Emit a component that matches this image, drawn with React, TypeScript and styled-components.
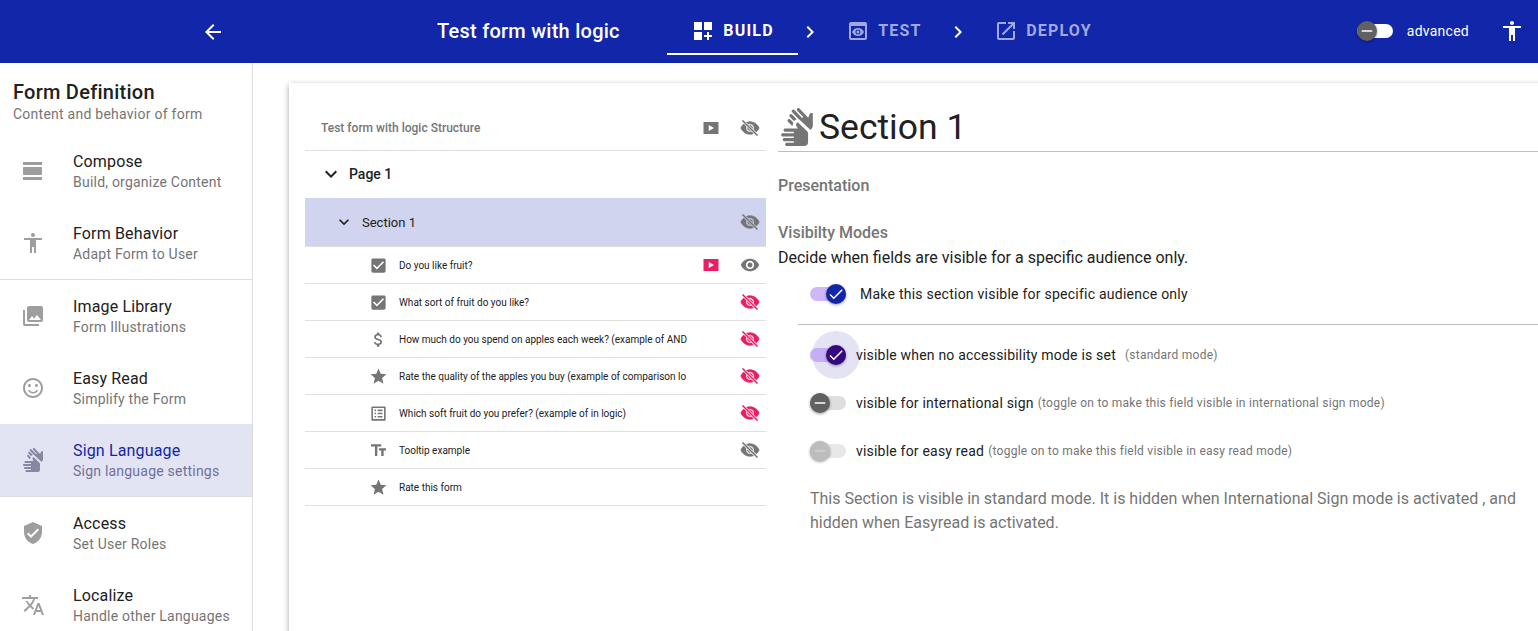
import React from "react";
import styled, { createGlobalStyle } from "styled-components";
import { MdSignLanguage } from "react-icons/md";

const GlobalStyle = createGlobalStyle`
  html, body {
    margin: 0;
    height: 100%;
    overflow: hidden;
    background: #fff;
    font-family: Roboto, "Liberation Sans", sans-serif;
  }
`;

const P = {
  back: "M20 11H7.83l5.59-5.59L12 4l-8 8 8 8 1.41-1.41L7.83 13H20v-2z",
  build: "M3 3h8v8H3zm10 0h8v8h-8zM3 13h8v8H3zm15 0h-2v3h-3v2h3v3h2v-3h3v-2h-3z",
  preview:
    "M19 3H5c-1.11 0-2 .9-2 2v14c0 1.1.89 2 2 2h14c1.1 0 2-.9 2-2V5c0-1.1-.89-2-2-2zm0 16H5V7h14v12zm-5.5-6c0 .83-.67 1.5-1.5 1.5s-1.5-.67-1.5-1.5.67-1.5 1.5-1.5 1.5.67 1.5 1.5zM12 9c-2.73 0-5.06 1.66-6 4 .94 2.34 3.27 4 6 4s5.06-1.66 6-4c-.94-2.34-3.27-4-6-4zm0 6.5c-1.38 0-2.5-1.12-2.5-2.5s1.12-2.5 2.5-2.5 2.5 1.12 2.5 2.5-1.12 2.5-2.5 2.5z",
  open: "M19 19H5V5h7V3H5c-1.11 0-2 .9-2 2v14c0 1.1.89 2 2 2h14c1.1 0 2-.9 2-2v-7h-2v7zM14 3v2h3.59l-9.83 9.83 1.41 1.41L19 6.41V10h2V3h-7z",
  chevron: "M10 6L8.59 7.41 13.17 12l-4.58 4.59L10 18l6-6z",
  access: "M12 2c1.1 0 2 .9 2 2s-.9 2-2 2-2-.9-2-2 .9-2 2-2zm9 7h-6v13h-2v-6h-2v6H9V9H3V7h18v2z",
  viewDay:
    "M2 21h19v-3H2v3zM20 8H3c-.55 0-1 .45-1 1v6c0 .55.45 1 1 1h17c.55 0 1-.45 1-1V9c0-.55-.45-1-1-1zM2 3v3h19V3H2z",
  photos:
    "M22 16V4c0-1.1-.9-2-2-2H8c-1.1 0-2 .9-2 2v12c0 1.1.9 2 2 2h12c1.1 0 2-.9 2-2zm-11-4l2.03 2.71L16 11l4 5H8l3-4zM2 6v14c0 1.1.9 2 2 2h14v-2H4V6H2z",
  smile:
    "M11.99 2C6.47 2 2 6.48 2 12s4.47 10 9.99 10C17.52 22 22 17.52 22 12S17.52 2 11.99 2zM12 20c-4.42 0-8-3.58-8-8s3.58-8 8-8 8 3.58 8 8-3.58 8-8 8zm3.5-9c.83 0 1.5-.67 1.5-1.5S16.33 8 15.5 8 14 8.67 14 9.5s.67 1.5 1.5 1.5zm-7 0c.83 0 1.5-.67 1.5-1.5S9.33 8 8.5 8 7 8.67 7 9.5 7.67 11 8.5 11zm3.5 5c-1.48 0-2.75-.81-3.45-2H6.88c.8 2.05 2.79 3.5 5.12 3.5s4.32-1.45 5.12-3.5h-1.67c-.7 1.19-1.97 2-3.45 2z",
  verified:
    "M12 1L3 5v6c0 5.55 3.84 10.74 9 12 5.16-1.26 9-6.45 9-12V5l-9-4zm-2 16l-4-4 1.41-1.41L10 14.17l6.59-6.59L18 9l-8 8z",
  translate:
    "M12.87 15.07l-2.54-2.51.03-.03c1.74-1.94 2.98-4.17 3.71-6.53H17V4h-7V2H8v2H1v1.99h11.17C11.5 7.92 10.44 9.75 9 11.35 8.07 10.32 7.3 9.19 6.69 8h-2c.73 1.63 1.73 3.17 2.98 4.56l-5.09 5.02L4 19l5-5 3.11 3.11.76-2.04zM18.5 10h-2L12 22h2l1.12-3h4.75L21 22h2l-4.5-12zm-2.62 7l1.62-4.33L19.12 17h-3.24z",
  expand: "M16.59 8.59L12 13.17 7.41 8.59 6 10l6 6 6-6z",
  checkBox:
    "M19 3H5c-1.11 0-2 .9-2 2v14c0 1.1.89 2 2 2h14c1.11 0 2-.9 2-2V5c0-1.1-.89-2-2-2zm-9 14l-5-5 1.41-1.41L10 14.17l7.59-7.59L19 8l-9 9z",
  money:
    "M11.8 10.9c-2.27-.59-3-1.2-3-2.15 0-1.09 1.01-1.85 2.7-1.85 1.78 0 2.44.85 2.5 2.1h2.21c-.07-1.72-1.12-3.3-3.21-3.81V3h-3v2.16c-1.94.42-3.5 1.68-3.5 3.61 0 2.31 1.91 3.46 4.7 4.13 2.5.6 3 1.48 3 2.41 0 .69-.49 1.79-2.7 1.79-2.06 0-2.87-.92-2.98-2.1h-2.2c.12 2.19 1.76 3.42 3.68 3.83V21h3v-2.15c1.95-.37 3.5-1.5 3.5-3.55 0-2.84-2.43-3.81-4.7-4.4z",
  star: "M12 17.27L18.18 21l-1.64-7.03L22 9.24l-7.19-.61L12 2 9.19 8.63 2 9.24l5.46 4.73L5.82 21z",
  listAlt:
    "M19 5v14H5V5h14m1.1-2H3.9c-.5 0-.9.4-.9.9v16.2c0 .4.4.9.9.9h16.2c.4 0 .9-.5.9-.9V3.9c0-.5-.5-.9-.9-.9zM11 7h6v2h-6V7zm0 4h6v2h-6v-2zm0 4h6v2h-6zM7 7h2v2H7zm0 4h2v2H7zm0 4h2v2H7z",
  text: "M2.5 4v3h5v12h3V7h5V4h-13zm19 5h-9v3h3v7h3v-7h3V9z",
  eye: "M12 4.5C7 4.5 2.73 7.61 1 12c1.73 4.39 6 7.5 11 7.5s9.27-3.11 11-7.5c-1.73-4.39-6-7.5-11-7.5zM12 17c-2.76 0-5-2.24-5-5s2.24-5 5-5 5 2.24 5 5-2.24 5-5 5zm0-8c-1.66 0-3 1.34-3 3s1.34 3 3 3 3-1.34 3-3-1.34-3-3-3z",
  play: "M2 4h20v16H2zM9 8v8l7-4z",
  minus: "M19 13H5v-2h14v2z",
  check: "M9 16.17L4.83 12l-1.42 1.41L9 19 21 7l-1.41-1.41z",
};

const Icon = ({ d, size = 24, color = "currentColor" }: { d: string; size?: number; color?: string }) => (
  <svg width={size} height={size} viewBox="0 0 24 24" fill={color} style={{ display: "block", flex: "none" }}>
    <path d={d} />
  </svg>
);

// eye with a slash cut through it, the gap round the slash follows the row background
const EyeOff = ({ color, id }: { color: string; id: string }) => (
  <svg width={20} height={20} viewBox="0 0 24 24" style={{ display: "block", flex: "none" }}>
    <mask id={id}>
      <rect width="24" height="24" fill="#fff" />
      <line x1="3" y1="3" x2="21" y2="21" stroke="#000" strokeWidth="3.4" />
    </mask>
    <path d={P.eye} fill={color} stroke={color} strokeWidth="0.8" mask={`url(#${id})`} />
    <line x1="3" y1="3" x2="21" y2="21" stroke={color} strokeWidth="2" />
  </svg>
);

const Header = styled.header`
  height: 63px;
  background: #1226aa;
  color: #fff;
  display: flex;
  align-items: center;
`;

const BackSlot = styled.div`
  width: 437px;
  flex: none;
  display: flex;
  padding-left: 201px;
  box-sizing: border-box;
`;

const FormTitle = styled.div`
  width: 230px;
  flex: none;
  font-size: 20px;
  font-weight: 500;
  letter-spacing: 0.25px;
  margin-bottom: 2px;
`;

const Tab = styled.div<{ $active?: boolean; $width: number }>`
  width: ${(p) => p.$width}px;
  box-sizing: border-box;
  height: 55px;
  flex: none;
  align-self: flex-start;
  display: flex;
  align-items: center;
  justify-content: center;
  gap: 8px;
  font-size: 16px;
  font-weight: 700;
  letter-spacing: 1.2px;
  color: ${(p) => (p.$active ? "#fff" : "#a0a8dd")};
  border-bottom: 2px solid ${(p) => (p.$active ? "#fff" : "transparent")};
  padding-top: 8px;
`;

const TabSep = styled.div`
  width: 24px;
  flex: none;
`;

const HeaderRight = styled.div`
  margin-left: auto;
  display: flex;
  align-items: center;
  padding: 0 14px 2px 0;
  font-size: 14px;
`;

const AdvancedLabel = styled.span`
  margin-left: 14px;
  margin-right: 31px;
  letter-spacing: 0.25px;
`;

const Body = styled.div`
  display: flex;
  height: 568px;
  overflow: hidden;
`;

const Sidebar = styled.aside`
  width: 253px;
  flex: none;
  box-sizing: border-box;
  border-right: 1px solid #dedede;
  padding-top: 16px;
`;

const SideHead = styled.div`
  padding: 0 13px;
  height: 56px;
`;

const SideTitle = styled.div`
  font-size: 20px;
  line-height: 26px;
  font-weight: 500;
  letter-spacing: 0.25px;
  color: #212121;
`;

const SideSub = styled.div`
  font-size: 14px;
  line-height: 18px;
  letter-spacing: 0.25px;
  color: #757575;
`;

const SideItem = styled.div<{ $active?: boolean; $divider?: boolean }>`
  height: 72px;
  display: flex;
  align-items: center;
  padding-left: 21px;
  background: ${(p) => (p.$active ? "#e3e4f3" : "transparent")};
  ${(p) => (p.$divider ? "border-top: 1px solid #dedede;" : "")}
`;

const SideIcon = styled.div<{ $active?: boolean }>`
  width: 52px;
  flex: none;
  color: ${(p) => (p.$active ? "#87889f" : "#9e9e9e")};
`;

const SideText = styled.div`
  display: flex;
  flex-direction: column;
`;

const Primary = styled.span<{ $active?: boolean }>`
  font-size: 16px;
  line-height: 22px;
  letter-spacing: 0.15px;
  color: ${(p) => (p.$active ? "#1226aa" : "#212121")};
`;

const Secondary = styled.span<{ $active?: boolean }>`
  font-size: 14px;
  line-height: 18px;
  letter-spacing: 0.22px;
  color: ${(p) => (p.$active ? "#70719a" : "#757575")};
`;

const Main = styled.main`
  flex: 1;
  min-width: 0;
  padding: 20px 0 0 36px;
`;

const Card = styled.div`
  display: flex;
  width: 1300px;
  height: 640px;
  background: #fff;
  box-shadow: 0 2px 6px rgba(0, 0, 0, 0.35);
  padding-left: 16px;
  box-sizing: border-box;
`;

const Tree = styled.div`
  width: 461px;
  flex: none;
`;

const TreeHead = styled.div`
  height: 68px;
  display: flex;
  align-items: center;
  padding: 22px 0 0 16px;
  box-sizing: border-box;
  font-size: 12px;
  font-weight: 500;
  color: #757575;
  border-bottom: 1px solid #e0e0e0;
`;

const Spacer = styled.div`
  flex: 1;
`;

const ActionSlot = styled.div`
  width: 32px;
  margin-left: 7px;
  flex: none;
  display: flex;
  justify-content: center;
`;

const PageRow = styled.div`
  height: 47px;
  display: flex;
  align-items: center;
  padding: 0 0 1px 14px;
  box-sizing: border-box;
  gap: 6px;
  font-size: 14px;
  font-weight: 500;
  color: #212121;
`;

const SectionRow = styled.div`
  height: 48px;
  display: flex;
  align-items: center;
  padding-left: 29px;
  gap: 8px;
  font-size: 13px;
  color: #212121;
  background: #d0d4ee;
  border-bottom: 1px solid #e0e0e0;
`;

const ItemRow = styled.div`
  height: 36px;
  display: flex;
  align-items: center;
  padding-left: 64px;
  border-bottom: 1px solid #e0e0e0;
  color: #757575;
`;

const ItemText = styled.div`
  margin-left: 11px;
  flex: none;
  white-space: nowrap;
  font-size: 10px;
  color: #212121;
`;

const Detail = styled.div`
  flex: 1;
  margin-left: 12px;
  min-width: 0;
`;

const TitleRow = styled.div`
  height: 69px;
  display: flex;
  align-items: center;
  gap: 3px;
  padding-top: 20px;
  box-sizing: border-box;
  border-bottom: 1px solid #bdbdbd;
  font-size: 35.5px;
  color: #212121;
  svg {
    color: #757575;
  }
`;

const SubHead = styled.div<{ $top: number }>`
  margin-top: ${(p) => p.$top}px;
  font-size: 16px;
  line-height: 22px;
  font-weight: 500;
  color: #757575;
`;

const Lead = styled.div`
  margin-top: 3px;
  font-size: 16px;
  line-height: 22px;
  color: #212121;
`;

const ToggleRow = styled.div<{ $height: number }>`
  height: ${(p) => p.$height}px;
  display: flex;
  align-items: center;
  padding-left: 32px;
  font-size: 14px;
  letter-spacing: 0.2px;
  color: #212121;
`;

const TopToggleRow = styled(ToggleRow)`
  gap: 14px;
  margin-top: 1px;
  letter-spacing: 0.24px;
`;

const Rule = styled.div`
  height: 1px;
  background: #bdbdbd;
  margin: 6px 0 6px 20px;
`;

const Hint = styled.span<{ $gap: number }>`
  position: relative;
  font-size: 12px;
  letter-spacing: 0.25px;
  color: #757575;
  margin-left: ${(p) => p.$gap}px;
`;

const Switch = styled.span`
  position: relative;
  display: block;
  width: 36px;
  height: 20px;
  flex: none;
`;

const Track = styled.span<{ $color: string }>`
  position: absolute;
  left: 0;
  top: 3px;
  width: 36px;
  height: 14px;
  border-radius: 7px;
  background: ${(p) => p.$color};
`;

const Ripple = styled.span`
  position: absolute;
  left: 2px;
  top: -14px;
  width: 48px;
  height: 48px;
  border-radius: 50%;
  background: #e4e3f4;
`;

const Thumb = styled.span<{ $on?: boolean; $color: string; $flat?: boolean }>`
  position: absolute;
  left: ${(p) => (p.$on ? 16 : 0)}px;
  top: 0;
  width: 20px;
  height: 20px;
  border-radius: 50%;
  color: ${(p) => (p.$flat ? "#d2d2d2" : "#fff")};
  background: ${(p) => p.$color};
  box-shadow: 0 1px 3px rgba(0, 0, 0, 0.4);
  display: flex;
  align-items: center;
  justify-content: center;
`;

const Toggle = ({
  on,
  track,
  thumb,
  ripple,
  flat,
}: {
  on?: boolean;
  track: string;
  thumb: string;
  ripple?: boolean;
  flat?: boolean;
}) => (
  <Switch>
    {ripple && <Ripple />}
    <Track $color={track} />
    <Thumb $on={on} $color={thumb} $flat={flat}>
      <Icon d={on ? P.check : P.minus} size={18} />
    </Thumb>
  </Switch>
);

const ToggleLabel = styled.span`
  position: relative;
  margin-left: 10px;
`;

const Summary = styled.div`
  margin: 12px 0 0 32px;
  font-size: 16px;
  line-height: 24px;
  color: #757575;
  width: 720px;
`;

const menu = [
  { icon: P.viewDay, title: "Compose", sub: "Build, organize Content" },
  { icon: P.access, title: "Form Behavior", sub: "Adapt Form to User" },
  { icon: P.photos, title: "Image Library", sub: "Form Illustrations", divider: true },
  { icon: P.smile, title: "Easy Read", sub: "Simplify the Form" },
  { sign: true, title: "Sign Language", sub: "Sign language settings", active: true },
  { icon: P.verified, title: "Access", sub: "Set User Roles", divider: true },
  { icon: P.translate, title: "Localize", sub: "Handle other Languages" },
];

const PINK = "#e91e63";
const GREY = "#757575";

const items = [
  { icon: P.checkBox, text: "Do you like fruit?", play: true, eye: "on", eyeColor: GREY },
  { icon: P.checkBox, text: "What sort of fruit do you like?", eye: "off", eyeColor: PINK },
  { icon: P.money, text: "How much do you spend on apples each week? (example of AND", eye: "off", eyeColor: PINK },
  { icon: P.star, text: "Rate the quality of the apples you buy (example of comparison lo", eye: "off", eyeColor: PINK },
  { icon: P.listAlt, text: "Which soft fruit do you prefer? (example of in logic)", eye: "off", eyeColor: PINK },
  { icon: P.text, text: "Tooltip example", eye: "off", eyeColor: GREY },
  { icon: P.star, text: "Rate this form" },
];

export default function App() {
  return (
    <>
      <GlobalStyle />
      <Header>
        <BackSlot>
          <Icon d={P.back} />
        </BackSlot>
        <FormTitle>Test form with logic</FormTitle>
        <Tab $active $width={131}>
          <Icon d={P.build} />
          BUILD
        </Tab>
        <TabSep>
          <Icon d={P.chevron} />
        </TabSep>
        <Tab $width={124}>
          <Icon d={P.preview} />
          TEST
        </Tab>
        <TabSep>
          <Icon d={P.chevron} />
        </TabSep>
        <Tab $width={146}>
          <Icon d={P.open} />
          DEPLOY
        </Tab>
        <HeaderRight>
          <Toggle track="#fff" thumb="#616161" />
          <AdvancedLabel>advanced</AdvancedLabel>
          <Icon d={P.access} />
        </HeaderRight>
      </Header>
      <Body>
        <Sidebar>
          <SideHead>
            <SideTitle>Form Definition</SideTitle>
            <SideSub>Content and behavior of form</SideSub>
          </SideHead>
          {menu.map((m) => (
            <SideItem key={m.title} $active={m.active} $divider={m.divider}>
              <SideIcon $active={m.active}>
                {m.sign ? <MdSignLanguage size={24} style={{ display: "block" }} /> : <Icon d={m.icon!} />}
              </SideIcon>
              <SideText>
                <Primary $active={m.active}>{m.title}</Primary>
                <Secondary $active={m.active}>{m.sub}</Secondary>
              </SideText>
            </SideItem>
          ))}
        </Sidebar>
        <Main>
          <Card>
            <Tree>
              <TreeHead>
                Test form with logic Structure
                <Spacer />
                <ActionSlot>
                  <Icon d={P.play} size={18} color={GREY} />
                </ActionSlot>
                <ActionSlot>
                  <EyeOff color={GREY} id="eye-head" />
                </ActionSlot>
              </TreeHead>
              <PageRow>
                <Icon d={P.expand} color="#212121" />
                Page 1
              </PageRow>
              <SectionRow>
                <Icon d={P.expand} size={20} color="#212121" />
                Section 1
                <Spacer />
                <ActionSlot>
                  <EyeOff color={GREY} id="eye-section" />
                </ActionSlot>
              </SectionRow>
              {items.map((it, i) => (
                <ItemRow key={it.text}>
                  <Icon d={it.icon} size={19} />
                  <ItemText>{it.text}</ItemText>
                  <Spacer />
                  {it.play && (
                    <ActionSlot>
                      <Icon d={P.play} size={18} color={PINK} />
                    </ActionSlot>
                  )}
                  {it.eye === "on" && (
                    <ActionSlot>
                      <Icon d={P.eye} size={20} color={it.eyeColor} />
                    </ActionSlot>
                  )}
                  {it.eye === "off" && (
                    <ActionSlot>
                      <EyeOff color={it.eyeColor!} id={`eye-${i}`} />
                    </ActionSlot>
                  )}
                </ItemRow>
              ))}
            </Tree>
            <Detail>
              <TitleRow>
                <MdSignLanguage size={38} />
                Section 1
              </TitleRow>
              <SubHead $top={23}>Presentation</SubHead>
              <SubHead $top={25}>Visibilty Modes</SubHead>
              <Lead>Decide when fields are visible for a specific audience only.</Lead>
              <TopToggleRow $height={48}>
                <Toggle on track="#cfb8f7" thumb="#1226aa" />
                Make this section visible for specific audience only
              </TopToggleRow>
              <Rule />
              <ToggleRow $height={48}>
                <Toggle on ripple track="#c6aef5" thumb="#35087f" />
                <ToggleLabel>visible when no accessibility mode is set</ToggleLabel>
                <Hint $gap={9}>(standard mode)</Hint>
              </ToggleRow>
              <ToggleRow $height={48}>
                <Toggle track="#dedede" thumb="#616161" />
                <ToggleLabel>visible for international sign</ToggleLabel>
                <Hint $gap={4}>(toggle on to make this field visible in international sign mode)</Hint>
              </ToggleRow>
              <ToggleRow $height={48}>
                <Toggle flat track="#e8e8e8" thumb="#bdbdbd" />
                <ToggleLabel>visible for easy read</ToggleLabel>
                <Hint $gap={4}>(toggle on to make this field visible in easy read mode)</Hint>
              </ToggleRow>
              <Summary>
                This Section is visible in standard mode. It is hidden when International Sign mode is activated , and
                hidden when Easyread is activated.
              </Summary>
            </Detail>
          </Card>
        </Main>
      </Body>
    </>
  );
}
